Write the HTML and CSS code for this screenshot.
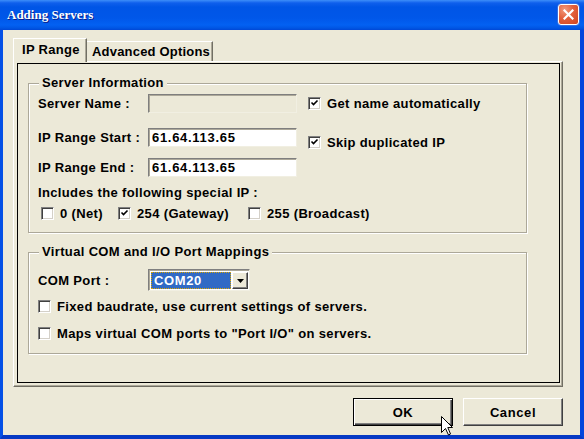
FILE: index.html
```html
<!DOCTYPE html>
<html>
<head>
<meta charset="utf-8">
<title>Adding Servers</title>
<link rel="stylesheet" href="styles.css">
</head>
<body>
<div class="window">
  <div class="titlebar">
    <span class="title">Adding Servers</span>
    <span class="close" aria-label="Close">
      <svg width="11" height="11" viewBox="0 0 11 11"><path d="M1.5 1.5 L9.5 9.5 M9.5 1.5 L1.5 9.5" stroke="#fff" stroke-width="2.2" stroke-linecap="square" fill="none"/></svg>
    </span>
  </div>
  <div class="client">
    <div class="tabs">
      <div class="tab active">IP Range</div>
      <div class="tab">Advanced Options</div>
    </div>
    <div class="page">
      <div class="sheet">
        <div class="group g1">
          <div class="legend">Server Information</div>
          <div class="row r1">
            <span class="lbl">Server Name :</span>
            <span class="field disabled"></span>
            <span class="check side"><span class="box"><svg class="tick" width="9" height="9" viewBox="0 0 9 9"><path d="M1.5 3.5 L3.5 5.5 L7.5 1.5" stroke="#000" stroke-width="1.6" fill="none"/></svg></span>Get name automatically</span>
          </div>
          <div class="row r2">
            <span class="lbl">IP Range Start :</span>
            <span class="field">61.64.113.65</span>
            <span class="check side low"><span class="box"><svg class="tick" width="9" height="9" viewBox="0 0 9 9"><path d="M1.5 3.5 L3.5 5.5 L7.5 1.5" stroke="#000" stroke-width="1.6" fill="none"/></svg></span>Skip duplicated IP</span>
          </div>
          <div class="row r3">
            <span class="lbl">IP Range End :</span>
            <span class="field">61.64.113.65</span>
          </div>
          <div class="line incl">Includes the following special IP :</div>
          <div class="row r4">
            <span class="check c-net"><span class="box"></span>0 (Net)</span>
            <span class="check c-gw"><span class="box"><svg class="tick" width="9" height="9" viewBox="0 0 9 9"><path d="M1.5 3.5 L3.5 5.5 L7.5 1.5" stroke="#000" stroke-width="1.6" fill="none"/></svg></span>254 (Gateway)</span>
            <span class="check"><span class="box"></span>255 (Broadcast)</span>
          </div>
        </div>
        <div class="group g2">
          <div class="legend">Virtual COM and I/O Port Mappings</div>
          <div class="row r5">
            <span class="lbl">COM Port :</span>
            <span class="combo">
              <span class="combo-value">COM20</span>
              <span class="combo-btn"><svg width="7" height="4" viewBox="0 0 7 4"><path d="M0 0 H7 L3.5 4 Z" fill="#000"/></svg></span>
            </span>
          </div>
          <div class="row r6">
            <span class="check"><span class="box"></span>Fixed baudrate, use current settings of servers.</span>
          </div>
          <div class="row r7">
            <span class="check"><span class="box"></span>Maps virtual COM ports to "Port I/O" on servers.</span>
          </div>
        </div>
      </div>
    </div>
    <div class="buttons">
      <span class="btn default">OK</span>
      <span class="btn">Cancel</span>
    </div>
  </div>
  <svg class="cursor" width="13" height="20" viewBox="0 0 13 20">
    <path d="M0.5 0.5 V16.5 L4.5 12.5 L7.5 19 L9.5 18 L6.8 11.5 H11.5 Z" fill="#fff" stroke="#000" stroke-width="1" stroke-linejoin="miter"/>
  </svg>
</div>
</body>
</html>
```
FILE: styles.css
```css
* { box-sizing: border-box; }
html, body { margin: 0; padding: 0; }
body {
  width: 584px;
  height: 439px;
  overflow: hidden;
  background: #ECE9D8;
  font-family: "Liberation Sans", Arial, sans-serif;
  font-size: 13px;
  font-weight: bold;
  color: #000;
}
.window {
  position: relative;
  width: 584px;
  height: 439px;
  display: flex;
  flex-direction: column;
  background: #ECE9D8;
}
.titlebar {
  height: 30px;
  flex: none;
  display: flex;
  align-items: center;
  justify-content: space-between;
  padding: 0 5px 0 7px;
  background: linear-gradient(to bottom, #3d8ef9 0px, #0f5fec 3px, #0055e6 7px, #0057e9 18px, #0361f2 25px, #0056e4 28px, #0047d6 30px);
}
.title {
  font-family: "Liberation Serif", "Times New Roman", serif;
  font-size: 13px;
  font-weight: bold;
  color: #fff;
  text-shadow: 1px 1px 0 #0a1f8a;
}
.close {
  width: 21px;
  height: 21px;
  margin-top: -1px;
  border: 1px solid #fff;
  border-radius: 3px;
  background: radial-gradient(circle at 30% 25%, #f19a7c 0%, #e3603c 45%, #cf4420 100%);
  display: flex;
  align-items: center;
  justify-content: center;
  box-shadow: 0 0 0 0.5px #6c84d8;
}
.client {
  flex: 1;
  border-left: 3px solid #0550e6;
  border-right: 4px solid #0445dc;
  border-bottom: 4px solid #0639c4;
  padding: 8px 0 0 10px;
  display: flex;
  flex-direction: column;
}
.tabs {
  height: 23px;
  display: flex;
  align-items: flex-end;
  position: relative;
  z-index: 1;
}
.tab {
  height: 20px;
  padding: 2px 0 0 5px;
  width: 126px;
  border-top: 1px solid #fff;
  border-right: 1px solid #716f64;
  box-shadow: inset -1px 0 0 #aca899;
  font-size: 13px;
  letter-spacing: 0.2px;
}
.tab.active {
  width: 74px;
  height: 24px;
  margin-bottom: -1px;
  background: #ECE9D8;
  border-left: 1px solid #fff;
  padding: 3px 0 0 8px;
  font-size: 13px;
  letter-spacing: 0.3px;
}
.page {
  width: 550px;
  height: 326px;
  border-top: 1px solid #fff;
  border-left: 1px solid #fff;
  border-right: 1px solid #716f64;
  border-bottom: 1px solid #716f64;
  box-shadow: inset -1px -1px 0 #aca899;
  padding: 1px 2px 3px 3px;
  display: flex;
}
.sheet {
  flex: 1;
  border: 1px solid #000;
  padding: 19px 0 0 10px;
}
.group {
  width: 499px;
  border: 1px solid #aca899;
  box-shadow: inset 1px 1px 0 #fff, 1px 1px 0 #fff;
  padding-left: 9px;
  letter-spacing: 0.35px;
}
.g1 { height: 150px; }
.g2 { height: 102px; margin-top: 19px; }
.legend {
  display: table;
  height: 16px;
  line-height: 16px;
  margin-top: -9px;
  margin-left: 1px;
  padding: 0 3px;
  background: #ECE9D8;
}
.row {
  display: flex;
  align-items: center;
}
.r1 { height: 19px; margin-top: 3px; }
.r2 { height: 19px; margin-top: 15px; }
.r3 { height: 19px; margin-top: 11px; }
.line { height: 16px; line-height: 16px; }
.incl { margin-top: 8px; }
.r4 { height: 16px; margin-top: 4px; }
.r5 { height: 22px; margin-top: 9px; }
.r6 { height: 16px; margin-top: 7px; }
.r7 { height: 16px; margin-top: 11px; }
.lbl { width: 110px; flex: none; }
.field {
  width: 149px;
  height: 19px;
  flex: none;
  background: #fff;
  border-style: solid;
  border-width: 1px;
  border-color: #7f7f7f #f1efe2 #f1efe2 #7f7f7f;
  box-shadow: inset 1px 1px 0 #aca899;
  padding: 2px 0 0 3px;
  line-height: 14px;
  letter-spacing: 0.7px;
}
.field.disabled {
  background: #ECE9D8;
}
.check {
  display: flex;
  align-items: center;
  white-space: nowrap;
}
.check.side { margin-left: 11px; }
.check.low { align-self: flex-start; margin-top: 7px; }
.box {
  width: 13px;
  height: 13px;
  flex: none;
  margin-right: 6px;
  background: #fff;
  border-style: solid;
  border-width: 1px;
  border-color: #808080 #fff #fff #808080;
  box-shadow: inset 1px 1px 0 #404040, inset -1px -1px 0 #d4d0c8;
  display: flex;
  align-items: center;
  justify-content: center;
}
.tick { display: block; }
.r4 .check:first-child { margin-left: 3px; }
.c-net { width: 77px; }
.c-gw { width: 130px; }
.combo {
  width: 102px;
  height: 22px;
  flex: none;
  display: flex;
  background: #fff;
  border-style: solid;
  border-width: 1px;
  border-color: #7f7f7f #f1efe2 #f1efe2 #7f7f7f;
  box-shadow: inset 1px 1px 0 #aca899;
  padding: 2px 1px 1px 2px;
}
.combo-value {
  flex: 1;
  background: #316ac5;
  color: #fff;
  border: 1px dotted #e0a800;
  padding-left: 2px;
  line-height: 15px;
  letter-spacing: 0.6px;
}
.combo-btn {
  width: 16px;
  flex: none;
  margin-left: 1px;
  background: #ECE9D8;
  border-style: solid;
  border-width: 1px;
  border-color: #fff #404040 #404040 #fff;
  box-shadow: inset -1px -1px 0 #808080;
  display: flex;
  align-items: center;
  justify-content: center;
}
.buttons {
  display: flex;
  justify-content: flex-end;
  gap: 10px;
  margin-top: 11px;
  padding-right: 17px;
}
.btn {
  width: 100px;
  height: 28px;
  display: flex;
  align-items: center;
  justify-content: center;
  border-style: solid;
  border-width: 1px;
  border-color: #fff #404040 #404040 #fff;
  box-shadow: inset -1px -1px 0 #808080;
  letter-spacing: 0.6px;
}
.btn.default {
  border: 1px solid #000;
  box-shadow: inset 1px 1px 0 #fff, inset -1px -1px 0 #404040, inset -2px -2px 0 #808080;
}
.cursor {
  position: absolute;
  left: 441px;
  top: 416px;
}
```
